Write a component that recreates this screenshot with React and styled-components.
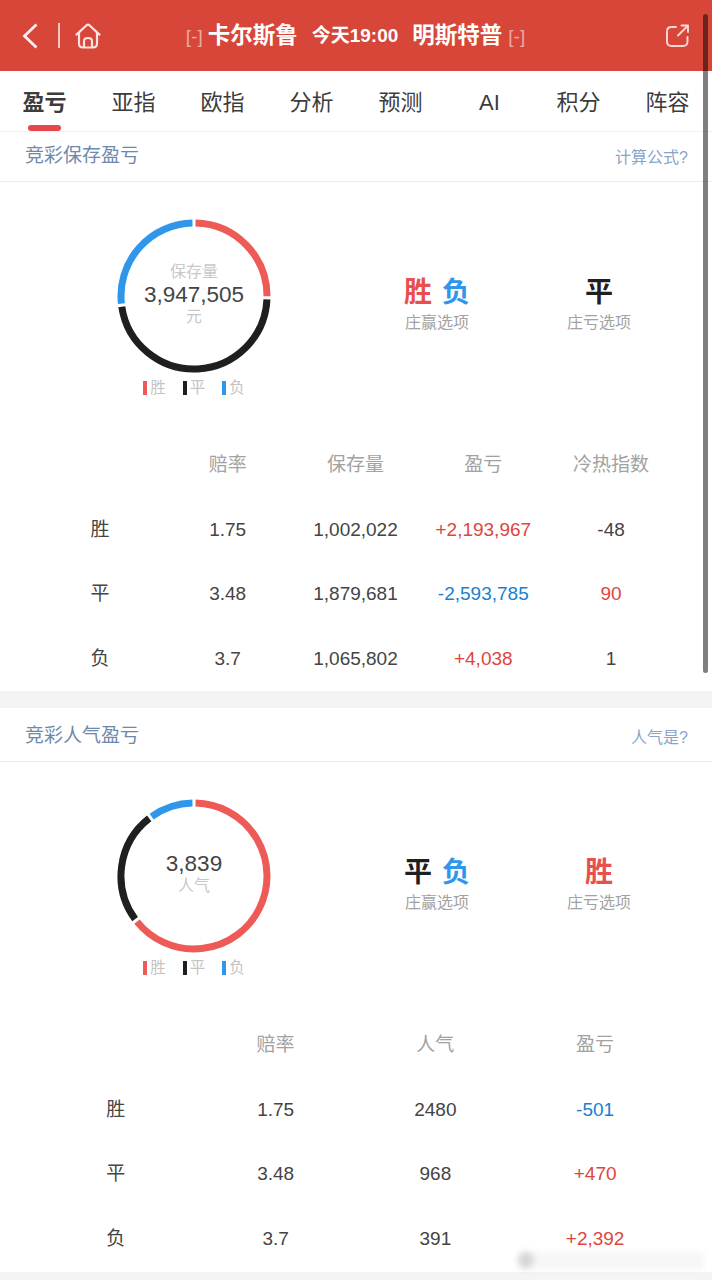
import React from 'react';
import styled, { createGlobalStyle } from 'styled-components';

const RED = '#ee5a55';
const BLACK = '#1f1f1f';
const BLUE = '#3096ec';

const GlobalStyle = createGlobalStyle`
  html, body {
    margin: 0;
    padding: 0;
    height: 1280px;
    overflow: hidden;
    background: #fff;
  }
  body {
    font-family: "Liberation Sans", "Noto Sans CJK SC", sans-serif;
  }
`;

const Page = styled.div`
  position: relative;
  width: 712px;
  height: 1280px;
  overflow: hidden;
  background: #f4f4f4;
`;

const Header = styled.header`
  display: grid;
  grid-template-columns: 1fr auto 1fr;
  align-items: center;
  height: 71px;
  padding: 0 23px 0 22px;
  box-sizing: border-box;
  background: #d74638;
  color: #fff;
`;

const HeaderLeft = styled.div`
  display: flex;
  align-items: center;
`;

const HeaderRight = styled.div`
  display: flex;
  justify-content: flex-end;
`;

const Divider = styled.span`
  width: 2px;
  height: 25px;
  margin: 0 15px 0 20px;
  background: rgba(255, 255, 255, 0.7);
`;

const Match = styled.div`
  display: flex;
  align-items: center;
`;

const Team = styled.span`
  font-size: 22.5px;
  font-weight: 700;
  line-height: 30px;
`;

const Score = styled.span`
  font-size: 19px;
  font-weight: 300;
  line-height: 30px;
  color: rgba(255, 255, 255, 0.55);
  margin: ${(p) => (p.$right ? '2px 0 0 6px' : '2px 5px 0 0')};
`;

const Time = styled.span`
  font-size: 19px;
  font-weight: 700;
  line-height: 30px;
  margin: 0 14px;
`;

const Tabs = styled.nav`
  display: grid;
  grid-template-columns: repeat(8, 1fr);
  height: 60px;
  border-bottom: 1px solid #f1f1f1;
  box-sizing: content-box;
  background: #fff;
`;

const Tab = styled.div`
  position: relative;
  display: flex;
  align-items: center;
  justify-content: center;
  padding-top: 4px;
  font-size: 22px;
  line-height: 30px;
  font-weight: ${(p) => (p.$active ? 700 : 400)};
  color: #3c3c3c;

  ${(p) =>
    p.$active &&
    `
    &::after {
      content: '';
      position: absolute;
      left: 28px;
      bottom: 0;
      width: 33px;
      height: 6px;
      border-radius: 3px;
      background: #e5474a;
    }
  `}
`;

const Section = styled.section`
  background: #fff;
  padding-bottom: ${(p) => p.$bottom}px;
`;

const TitleRow = styled.div`
  display: flex;
  justify-content: space-between;
  align-items: flex-end;
  height: ${(p) => p.$height}px;
  padding: 0 24px 14px 25px;
  box-sizing: border-box;
  border-bottom: 1px solid #ececec;
`;

const Title = styled.div`
  font-size: 19px;
  line-height: 26px;
  margin-bottom: -2px;
  color: #6d8aab;
`;

const HelpLink = styled.div`
  font-size: 16px;
  line-height: 22px;
  margin-bottom: -2px;
  color: #87a5c7;
`;

const Summary = styled.div`
  display: grid;
  grid-template-columns: 239px 162px 162px;
  padding: 37px 0 35px 117px;
`;

const DonutColumn = styled.div`
  display: flex;
  flex-direction: column;
  width: 154px;
`;

const DonutWrap = styled.div`
  position: relative;
  width: 154px;
  height: 154px;
`;

const DonutLabel = styled.div`
  position: absolute;
  inset: 0 0 3px 0;
  display: flex;
  flex-direction: column;
  align-items: center;
  justify-content: center;
`;

const DonutCaption = styled.div`
  font-size: 16px;
  line-height: 22px;
  color: #c8c8c8;
`;

const DonutValue = styled.div`
  font-size: 22.5px;
  line-height: 23px;
  color: #444;
`;

const Legend = styled.div`
  display: flex;
  justify-content: center;
  gap: 17px;
  margin-top: 5px;
  height: 20px;
`;

const LegendItem = styled.div`
  display: flex;
  align-items: center;
  gap: 3px;
  font-size: 15.5px;
  line-height: 20px;
  color: #c4c4c4;

  &::before {
    content: '';
    width: 4px;
    height: 14px;
    background: ${(p) => p.$color};
  }
`;

const Option = styled.div`
  display: flex;
  flex-direction: column;
  align-items: center;
  margin-top: 56px;
`;

const OptionMarks = styled.div`
  display: flex;
  gap: 10px;
  height: 36px;
  font-size: 28px;
  line-height: 36px;
  font-weight: 700;
`;

const Mark = styled.span`
  color: ${(p) => p.$color};
`;

const OptionLabel = styled.div`
  margin-top: 2px;
  font-size: 16px;
  line-height: 20px;
  color: #a2a2a2;
`;

const Table = styled.div`
  display: grid;
  grid-template-columns: repeat(${(p) => p.$cols}, 1fr);
  grid-auto-rows: 64.5px;
  padding: 0 37px 0 36px;
`;

const Cell = styled.div`
  display: flex;
  align-items: center;
  justify-content: center;
  font-size: 19px;
  line-height: 24px;
  color: ${(p) => p.$color || '#444'};
`;

const Gap = styled.div`
  height: 17px;
  background: #f4f4f4;
`;

const Scrollbar = styled.div`
  position: absolute;
  left: 703px;
  top: 14px;
  width: 5px;
  height: 659px;
  border-radius: 3px;
  background: rgba(0, 0, 0, 0.5);
`;

const Watermark = styled.div`
  position: absolute;
  left: 518px;
  top: 1252px;
  width: 186px;
  height: 18px;
  background: rgba(190, 190, 190, 0.12);
  filter: blur(3px);

  &::before {
    content: '';
    position: absolute;
    left: 0;
    top: 0;
    width: 16px;
    height: 16px;
    border-radius: 50%;
    background: rgba(150, 150, 150, 0.35);
  }
`;

const ChevronIcon = () => (
  <svg width="16" height="26" viewBox="0 0 16 26" fill="none">
    <path d="M14.5 1.5 L2.5 13 L14.5 24.5" stroke="#fdeeee" strokeWidth="2.8" />
  </svg>
);

const HomeIcon = () => (
  <svg width="26" height="26" viewBox="0 0 26 26" fill="none" stroke="#fbe3e0" strokeWidth="2.2" strokeLinejoin="round">
    <path d="M1.5 11.6 L11.6 2.2 Q13 1 14.4 2.2 L24.5 11.6" strokeLinecap="round" />
    <path d="M4 9.8 V20.5 Q4 24.5 8 24.5 H18 Q22 24.5 22 20.5 V9.8" />
    <path d="M9 24.5 V18 Q9 15 13 15 Q17 15 17 18 V24.5" />
  </svg>
);

const ShareIcon = () => (
  <svg width="23" height="23" viewBox="0 0 23 23" fill="none" stroke="#f9d9d5" strokeWidth="1.9" strokeLinecap="round" strokeLinejoin="round">
    <path d="M10 3 H5.5 Q1 3 1 7.5 V17.5 Q1 22 5.5 22 H17 Q21.5 22 21.5 17.5 V13" />
    <path d="M12 11.5 L21.5 2" />
    <path d="M15.5 1.5 H22 V8" />
  </svg>
);

const polar = (deg, r) => {
  const a = ((deg - 90) * Math.PI) / 180;
  return [77 + r * Math.cos(a), 77 + r * Math.sin(a)];
};

const Donut = ({ values, children }) => {
  const total = values.reduce((s, v) => s + v.value, 0);
  let start = 0;
  return (
    <DonutWrap>
      <svg width="154" height="154" viewBox="0 0 154 154" fill="none">
        {values.map((v) => {
          const sweep = (v.value / total) * 360;
          const [x1, y1] = polar(start + 1.2, 73);
          const [x2, y2] = polar(start + sweep - 1.2, 73);
          const large = sweep > 180 ? 1 : 0;
          start += sweep;
          return (
            <path
              key={v.color}
              d={`M${x1} ${y1} A73 73 0 ${large} 1 ${x2} ${y2}`}
              stroke={v.color}
              strokeWidth="7"
            />
          );
        })}
      </svg>
      <DonutLabel>{children}</DonutLabel>
    </DonutWrap>
  );
};

const OptionBlock = ({ marks, label }) => (
  <Option>
    <OptionMarks>
      {marks.map((m) => (
        <Mark key={m[0]} $color={m[1]}>{m[0]}</Mark>
      ))}
    </OptionMarks>
    <OptionLabel>{label}</OptionLabel>
  </Option>
);

const SummaryBlock = ({ values, center, win, lose }) => (
  <Summary>
    <DonutColumn>
      <Donut values={values}>{center}</Donut>
      <Legend>
        <LegendItem $color={RED}>胜</LegendItem>
        <LegendItem $color={BLACK}>平</LegendItem>
        <LegendItem $color={BLUE}>负</LegendItem>
      </Legend>
    </DonutColumn>
    <OptionBlock marks={win} label="庄赢选项" />
    <OptionBlock marks={lose} label="庄亏选项" />
  </Summary>
);

const DataTable = ({ head, rows }) => (
  <Table $cols={head.length}>
    {head.map((h, i) => (
      <Cell key={i} $color="#a2a2a2">{h}</Cell>
    ))}
    {rows.map((row) =>
      row.map((c, i) =>
        Array.isArray(c) ? (
          <Cell key={row[0] + i} $color={c[1]}>{c[0]}</Cell>
        ) : (
          <Cell key={row[0] + i}>{c}</Cell>
        )
      )
    )}
  </Table>
);

const UP = '#e0453c';
const DOWN = '#1a7fd0';
const tabs = ['盈亏', '亚指', '欧指', '分析', '预测', 'AI', '积分', '阵容'];

const App = () => (
  <Page>
    <GlobalStyle />
    <Header>
      <HeaderLeft>
        <ChevronIcon />
        <Divider />
        <HomeIcon />
      </HeaderLeft>
      <Match>
        <Score>[-]</Score>
        <Team>卡尔斯鲁</Team>
        <Time>今天19:00</Time>
        <Team>明斯特普</Team>
        <Score $right>[-]</Score>
      </Match>
      <HeaderRight>
        <ShareIcon />
      </HeaderRight>
    </Header>
    <Tabs>
      {tabs.map((t, i) => (
        <Tab key={t} $active={i === 0}>{t}</Tab>
      ))}
    </Tabs>
    <Section $bottom={0}>
      <TitleRow $height={50}>
        <Title>竞彩保存盈亏</Title>
        <HelpLink>计算公式?</HelpLink>
      </TitleRow>
      <SummaryBlock
        values={[
          { value: 1002022, color: RED },
          { value: 1879681, color: BLACK },
          { value: 1065802, color: BLUE },
        ]}
        center={
          <>
            <DonutCaption>保存量</DonutCaption>
            <DonutValue>3,947,505</DonutValue>
            <DonutCaption>元</DonutCaption>
          </>
        }
        win={[['胜', '#e8504e'], ['负', BLUE]]}
        lose={[['平', BLACK]]}
      />
      <DataTable
        head={['', '赔率', '保存量', '盈亏', '冷热指数']}
        rows={[
          ['胜', '1.75', '1,002,022', ['+2,193,967', UP], '-48'],
          ['平', '3.48', '1,879,681', ['-2,593,785', DOWN], ['90', UP]],
          ['负', '3.7', '1,065,802', ['+4,038', UP], '1'],
        ]}
      />
    </Section>
    <Gap />
    <Section $bottom={1}>
      <TitleRow $height={54}>
        <Title>竞彩人气盈亏</Title>
        <HelpLink>人气是?</HelpLink>
      </TitleRow>
      <SummaryBlock
        values={[
          { value: 2480, color: RED },
          { value: 968, color: BLACK },
          { value: 391, color: BLUE },
        ]}
        center={
          <>
            <DonutValue>3,839</DonutValue>
            <DonutCaption>人气</DonutCaption>
          </>
        }
        win={[['平', BLACK], ['负', BLUE]]}
        lose={[['胜', '#e8504e']]}
      />
      <DataTable
        head={['', '赔率', '人气', '盈亏']}
        rows={[
          ['胜', '1.75', '2480', ['-501', DOWN]],
          ['平', '3.48', '968', ['+470', UP]],
          ['负', '3.7', '391', ['+2,392', UP]],
        ]}
      />
    </Section>
    <Scrollbar />
    <Watermark />
  </Page>
);

export default App;
